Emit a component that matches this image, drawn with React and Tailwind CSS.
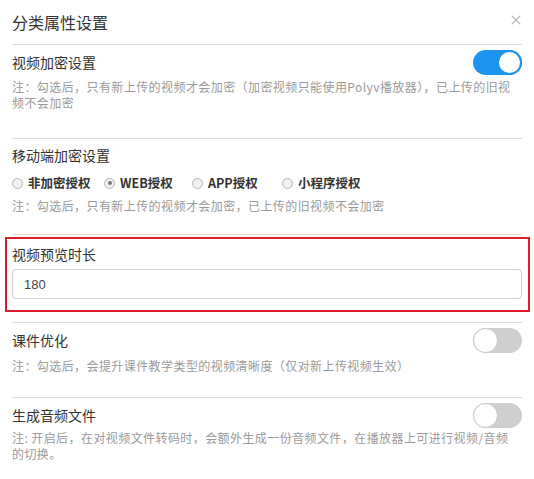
import React, { useState } from "react";

const FONT = {
  fontFamily: '"Microsoft YaHei", "Noto Sans CJK SC", "Noto Sans", sans-serif',
};

const Toggle = ({ on, onChange }) => (
  <button
    type="button"
    onClick={onChange}
    className={`relative w-[49px] h-[25px] rounded-full shrink-0 ${
      on ? "bg-[#1d95ee]" : "bg-[#cfcfcf]"
    }`}
  >
    <span
      className={`absolute top-0 w-[25px] h-[25px] rounded-full bg-white ${
        on ? "right-0 border-2 border-[#1d95ee]" : "left-0 border border-[#c8c8c8]"
      }`}
    />
  </button>
);

const Radio = ({ label, checked, onPick, width }) => (
  <label className={`flex items-center cursor-pointer ${width}`} onClick={onPick}>
    <span className="w-[11px] h-[11px] rounded-full border border-[#b5b5b5] bg-[#f1f1f1] flex items-center justify-center mr-[5px]">
      {checked && <span className="w-[4px] h-[4px] rounded-full bg-[#777]" />}
    </span>
    <span className="text-[12.5px] font-bold text-[#333]">{label}</span>
  </label>
);

// notes are a touch wider in the original (full-width punctuation)
const Note = ({ children }) => (
  <div className="text-[12px] leading-[16px] tracking-[0.42px] text-[#9a9a9a]">{children}</div>
);

export default function App() {
  const [encrypt, setEncrypt] = useState(true);
  const [courseware, setCourseware] = useState(false);
  const [audio, setAudio] = useState(false);
  const [mode, setMode] = useState("web");
  const [preview, setPreview] = useState("180");

  const modes = [
    { key: "none", label: "非加密授权", width: "w-[92px]" },
    { key: "web", label: "WEB授权", width: "w-[88px]" },
    { key: "app", label: "APP授权", width: "w-[90px]" },
    { key: "mini", label: "小程序授权", width: "w-[90px]" },
  ];

  return (
    <div className="w-[534px] h-[479px] bg-white px-3 overflow-hidden" style={FONT}>
      <div className="h-[45px] flex items-center justify-between border-b border-[#dcdcdc]">
        <span className="text-[16px] text-[#333]">分类属性设置</span>
        {/* close */}
        <svg width="10" height="10" viewBox="0 0 10 10" className="mr-[1px] -mt-[4px]">
          <path d="M1 1 L9 9 M9 1 L1 9" stroke="#bdbdbd" strokeWidth="1.4" />
        </svg>
      </div>

      <div className="pt-[5px] pb-[27px] border-b border-[#dcdcdc]">
        <div className="flex items-center justify-between">
          <span className="text-[14px] text-[#333]">视频加密设置</span>
          <Toggle on={encrypt} onChange={() => setEncrypt(!encrypt)} />
        </div>
        <div className="mt-[4px]">
          <Note>
            注：勾选后，只有新上传的视频才会加密（加密视频只能使用Polyv播放器），已上传的旧视
            <br />
            频不会加密
          </Note>
        </div>
      </div>

      <div className="pt-[6px] pb-[20px] border-b border-[#dcdcdc]">
        <div className="text-[14px] leading-[20px] text-[#333]">移动端加密设置</div>
        <div className="flex items-center h-[20px] mt-[8px]">
          {modes.map((m) => (
            <Radio
              key={m.key}
              label={m.label}
              width={m.width}
              checked={mode === m.key}
              onPick={() => setMode(m.key)}
            />
          ))}
        </div>
        <div className="mt-[5px]">
          <Note>注：勾选后，只有新上传的视频才会加密，已上传的旧视频不会加密</Note>
        </div>
      </div>

      <div className="mt-[2px] ml-[-7px] mr-[-8px] border-2 border-[#dc1e2c] pl-[5px] pr-[6px] pt-[5px] pb-[11px]">
        <div className="text-[14px] leading-[20px] text-[#333]">视频预览时长</div>
        <input
          value={preview}
          onChange={(e) => setPreview(e.target.value)}
          className="mt-[5px] w-full h-[30px] border border-[#cfcfcf] rounded-[4px] px-[11px] text-[13px] text-[#444] outline-none"
          style={{ fontFamily: '"Liberation Sans", Arial, sans-serif' }}
        />
      </div>

      <div className="mt-[10px] pt-[5px] pb-[23px] border-t border-b border-[#dcdcdc]">
        <div className="flex items-center justify-between">
          <span className="text-[14px] text-[#333]">课件优化</span>
          <Toggle on={courseware} onChange={() => setCourseware(!courseware)} />
        </div>
        <div className="mt-[5px]">
          <Note>注：勾选后，会提升课件教学类型的视频清晰度（仅对新上传视频生效）</Note>
        </div>
      </div>

      <div className="pt-[5px]">
        <div className="flex items-center justify-between">
          <span className="text-[14px] text-[#333]">生成音频文件</span>
          <Toggle on={audio} onChange={() => setAudio(!audio)} />
        </div>
        <div className="mt-[2px]">
          <Note>
            注: 开启后，在对视频文件转码时，会额外生成一份音频文件，在播放器上可进行视频/音频
            <br />
            的切换。
          </Note>
        </div>
      </div>
    </div>
  );
}
